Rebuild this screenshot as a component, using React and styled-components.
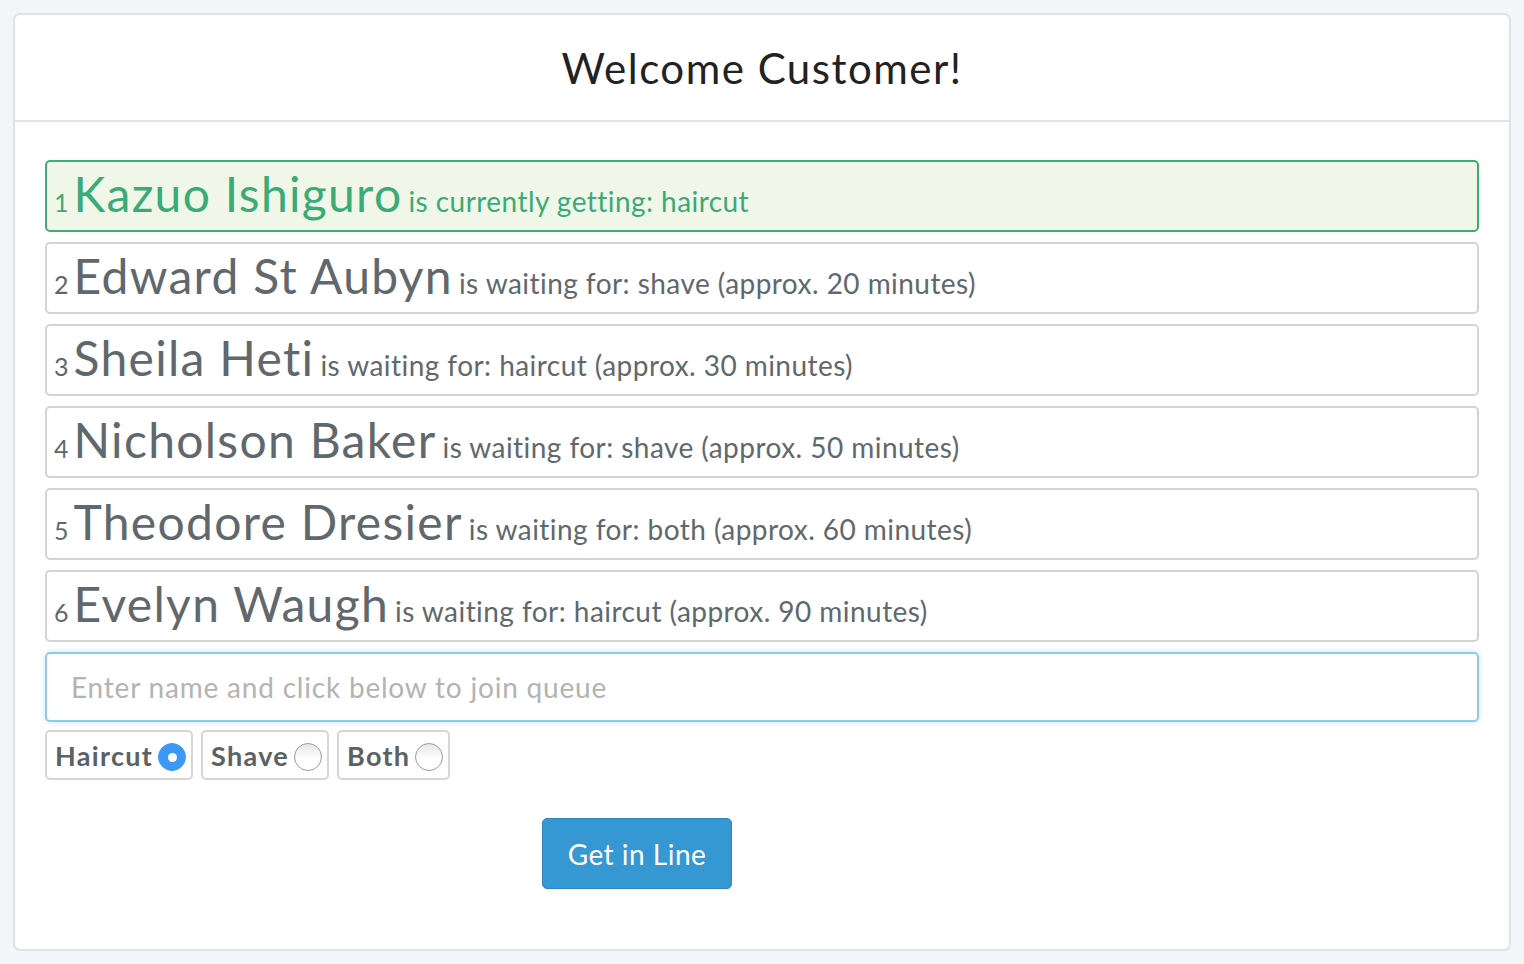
import React from "react";
import styled, { createGlobalStyle } from "styled-components";

const Global = createGlobalStyle`
  html, body { margin: 0; padding: 0; background: #f3f6f9; }
  body { font-family: Lato, "Open Sans", sans-serif; }
  * { box-sizing: border-box; }
`;

const Page = styled.div`
  padding: 13px;
`;

const Card = styled.div`
  background: #fff;
  border: 2px solid #dbe3eb;
  border-radius: 7px;
  height: 938px;
  display: flex;
  flex-direction: column;
`;

const Header = styled.div`
  height: 107px;
  border-bottom: 2px solid #dbe3eb;
  display: flex;
  align-items: center;
  justify-content: center;
`;

const Title = styled.h1`
  margin: 0;
  font-weight: 400;
  font-size: 42px;
  letter-spacing: 1.5px;
  color: #222;
  padding-top: 1px;
`;

const Body = styled.div`
  padding: 38px 30px 0 30px;
  display: flex;
  flex-direction: column;
`;

const List = styled.div`
  display: flex;
  flex-direction: column;
  gap: 10px;
`;

const Row = styled.div`
  height: 72px;
  border: 2px solid ${(p) => (p.$active ? "#3dad78" : "#d3d3d3")};
  background: ${(p) => (p.$active ? "#f0f7e9" : "#fff")};
  color: ${(p) => (p.$active ? "#3aab76" : "#60686d")};
  border-radius: 5px;
  padding: 3px 8px 0 7px;
  display: flex;
  align-items: baseline;
  white-space: nowrap;
  line-height: 1.2;
`;

const Num = styled.span`
  font-size: 25px;
  margin-right: 5px;
`;

const Name = styled.span`
  font-size: 48px;
  letter-spacing: 1.3px;
  margin-right: 6px;
`;

const Status = styled.span`
  font-size: 28px;
  letter-spacing: 0.45px;
`;

const Input = styled.input`
  margin-top: 10px;
  height: 70px;
  width: 100%;
  border: 2px solid #8dcbea;
  border-radius: 5px;
  box-shadow: 0 0 6px rgba(102, 175, 233, 0.35);
  padding: 0 24px;
  font-family: Lato, "Open Sans", sans-serif;
  font-size: 28px;
  letter-spacing: 0.8px;
  color: #555;
  outline: none;
  &::placeholder { color: #b3b3b3; }
`;

const Options = styled.div`
  margin-top: 8px;
  display: flex;
  gap: 8px;
`;

const Option = styled.label`
  height: 50px;
  border: 2px solid #d6d6d6;
  border-radius: 5px;
  padding: 0 5px 0 8px;
  display: flex;
  align-items: center;
  gap: 5px;
  font-size: 27px;
  font-weight: 700;
  letter-spacing: 1.3px;
  color: #5b6165;
`;

const Radio = styled.span`
  width: 28px;
  height: 28px;
  border-radius: 50%;
  margin-top: 4px;
  display: flex;
  align-items: center;
  justify-content: center;
  background: ${(p) => (p.$checked ? "#3c98f7" : "linear-gradient(#e8e8e8, #fff 60%)")};
  border: 1px solid ${(p) => (p.$checked ? "#3c98f7" : "#9a9a9a")};
  &::after {
    content: "";
    display: ${(p) => (p.$checked ? "block" : "none")};
    width: 9px;
    height: 9px;
    border-radius: 50%;
    background: #fff;
  }
`;

const ButtonRow = styled.div`
  margin-top: 38px;
  padding-left: 497px;
`;

const Button = styled.button`
  width: 190px;
  height: 71px;
  background: #3598d2;
  border: 1px solid #2c88c0;
  border-radius: 5px;
  color: #fff;
  font-family: Lato, "Open Sans", sans-serif;
  font-size: 28px;
  letter-spacing: 0.5px;
`;

const queue = [
  { name: "Kazuo Ishiguro", text: "is currently getting: haircut", active: true },
  { name: "Edward St Aubyn", text: "is waiting for: shave (approx. 20 minutes)" },
  { name: "Sheila Heti", text: "is waiting for: haircut (approx. 30 minutes)" },
  { name: "Nicholson Baker", text: "is waiting for: shave (approx. 50 minutes)" },
  { name: "Theodore Dresier", text: "is waiting for: both (approx. 60 minutes)" },
  { name: "Evelyn Waugh", text: "is waiting for: haircut (approx. 90 minutes)" },
];

export default function App() {
  return (
    <Page>
      <Global />
      <Card>
        <Header>
          <Title>Welcome Customer!</Title>
        </Header>
        <Body>
          <List>
            {queue.map((q, i) => (
              <Row key={q.name} $active={q.active}>
                <Num>{i + 1}</Num>
                <Name>{q.name}</Name>
                <Status>{q.text}</Status>
              </Row>
            ))}
          </List>
          <Input placeholder="Enter name and click below to join queue" />
          <Options>
            <Option>Haircut<Radio $checked /></Option>
            <Option>Shave<Radio /></Option>
            <Option>Both<Radio /></Option>
          </Options>
          <ButtonRow>
            <Button>Get in Line</Button>
          </ButtonRow>
        </Body>
      </Card>
    </Page>
  );
}
